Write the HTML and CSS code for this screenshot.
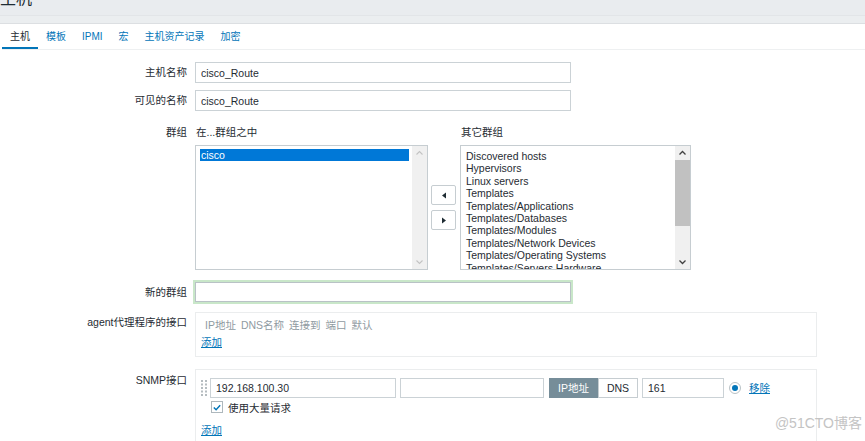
FILE: index.html
```html
<!DOCTYPE html>
<html>
<head>
<meta charset="utf-8">
<link rel="stylesheet" href="styles.css">
</head>
<body>
<header class="page-header"><h1 class="title">主机</h1></header>
<div class="content">
  <nav class="tabs">
    <a class="tab active">主机</a>
    <a class="tab">模板</a>
    <a class="tab">IPMI</a>
    <a class="tab">宏</a>
    <a class="tab">主机资产记录</a>
    <a class="tab">加密</a>
  </nav>
  <div class="form">
    <div class="row row-name">
      <div class="lbl">主机名称</div>
      <input class="text wide" value="cisco_Route">
    </div>
    <div class="row row-visible">
      <div class="lbl">可见的名称</div>
      <input class="text wide" value="cisco_Route">
    </div>
    <div class="row row-groups">
      <div class="lbl lbl-head">群组</div>
      <div class="groups">
        <div class="group-head">在...群组之中</div>
        <div></div>
        <div class="group-head">其它群组</div>
        <div class="listbox">
          <div class="items">
            <div class="item sel">cisco</div>
          </div>
          <div class="scroll">
            <svg class="arr" width="15" height="14" viewBox="0 0 15 14"><polyline points="4.5,8.5 7.5,5.5 10.5,8.5" fill="none" stroke="#c3c3c3" stroke-width="1.1"/></svg>
            <div class="track"></div>
            <svg class="arr" width="15" height="14" viewBox="0 0 15 14"><polyline points="4.5,5.5 7.5,8.5 10.5,5.5" fill="none" stroke="#c3c3c3" stroke-width="1.1"/></svg>
          </div>
        </div>
        <div class="move-btns">
          <button class="move-btn"><svg width="6" height="7" viewBox="0 0 6 7"><polygon points="5,0.5 5,6.5 1,3.5" fill="#1f2c33"/></svg></button>
          <button class="move-btn"><svg width="6" height="7" viewBox="0 0 6 7"><polygon points="1,0.5 1,6.5 5,3.5" fill="#1f2c33"/></svg></button>
        </div>
        <div class="listbox">
          <div class="items other">
            <div class="item">Discovered hosts</div>
            <div class="item">Hypervisors</div>
            <div class="item">Linux servers</div>
            <div class="item">Templates</div>
            <div class="item">Templates/Applications</div>
            <div class="item">Templates/Databases</div>
            <div class="item">Templates/Modules</div>
            <div class="item">Templates/Network Devices</div>
            <div class="item">Templates/Operating Systems</div>
            <div class="item">Templates/Servers Hardware</div>
          </div>
          <div class="scroll">
            <svg class="arr" width="15" height="14" viewBox="0 0 15 14"><polyline points="4.5,8.5 7.5,5.5 10.5,8.5" fill="none" stroke="#404040" stroke-width="1.3"/></svg>
            <div class="track"><div class="thumb"></div></div>
            <svg class="arr" width="15" height="14" viewBox="0 0 15 14"><polyline points="4.5,5.5 7.5,8.5 10.5,5.5" fill="none" stroke="#404040" stroke-width="1.3"/></svg>
          </div>
        </div>
      </div>
    </div>
    <div class="row row-newgroup">
      <div class="lbl">新的群组</div>
      <input class="text wide focus" value="">
    </div>
    <div class="row row-agent">
      <div class="lbl lbl-box">agent代理程序的接口</div>
      <div class="iface-box agent-box">
        <div class="iface-head">
          <span>IP地址</span><span>DNS名称</span><span>连接到</span><span>端口</span><span>默认</span>
        </div>
        <a class="link">添加</a>
      </div>
    </div>
    <div class="row row-snmp">
      <div class="lbl lbl-snmp">SNMP接口</div>
      <div class="iface-box snmp-box">
        <div class="snmp-line">
          <svg class="handle" width="6" height="16" viewBox="0 0 6 16">
            <g fill="#b5bcc0">
              <rect x="0" y="0" width="2" height="2"/><rect x="4" y="0" width="2" height="2"/>
              <rect x="0" y="3.5" width="2" height="2"/><rect x="4" y="3.5" width="2" height="2"/>
              <rect x="0" y="7" width="2" height="2"/><rect x="4" y="7" width="2" height="2"/>
              <rect x="0" y="10.5" width="2" height="2"/><rect x="4" y="10.5" width="2" height="2"/>
              <rect x="0" y="14" width="2" height="2"/><rect x="4" y="14" width="2" height="2"/>
            </g>
          </svg>
          <input class="text ip" value="192.168.100.30">
          <input class="text dns" value="">
          <div class="seg">
            <span class="seg-btn on">IP地址</span><span class="seg-btn">DNS</span>
          </div>
          <input class="text port" value="161">
          <span class="radio"><span class="dot"></span></span>
          <a class="link remove">移除</a>
        </div>
        <div class="bulk-line">
          <span class="checkbox"><svg width="11" height="11" viewBox="0 0 11 11"><polyline points="2,5.5 4.5,8 9,3" fill="none" stroke="#0275b8" stroke-width="1.6"/></svg></span>
          <span class="bulk-text">使用大量请求</span>
        </div>
        <a class="link add-snmp">添加</a>
      </div>
    </div>
  </div>
</div>
<div class="watermark">@51CTO博客</div>
</body>
</html>
```
FILE: styles.css
```css
* { box-sizing: border-box; }

body {
  margin: 0;
  width: 865px;
  height: 441px;
  overflow: hidden;
  position: relative;
  background: #fff;
  color: #1f2c33;
  font-family: "Liberation Sans", Arial, "Noto Sans CJK SC", sans-serif;
  font-size: 10.5px;
}

.page-header {
  height: 24px;
  background: linear-gradient(#e9ecef 0, #e9ecef 15px, #e2e5e8 15px, #e2e5e8 16px, #ebeef0 16px);
  border-bottom: 1px solid #dcdfe2;
  overflow: hidden;
}

.title {
  margin: -9px 0 0 0;
  font-size: 16px;
  line-height: 16px;
  font-weight: normal;
  color: #1f2c33;
}

.content {
  margin-left: 2px;
}

.tabs {
  display: flex;
  height: 26px;
  border-bottom: 1px solid #eef0f1;
  font-size: 10px;
}

.tab {
  padding: 0 8px;
  line-height: 26px;
  height: 25px;
  color: #0275b8;
  border-bottom: 2px solid transparent;
}

.tab.active {
  color: #1f2c33;
  border-bottom-color: #0275b8;
}

.form {
  padding-top: 12px;
}

.row {
  display: flex;
  align-items: flex-start;
}

.lbl {
  width: 193px;
  flex: none;
  text-align: right;
  padding-right: 8px;
  line-height: 21px;
}

.text {
  height: 21px;
  border: 1px solid #cbd2d6;
  padding: 0 5px;
  font: inherit;
  color: #1f2c33;
  background: #fff;
  outline: none;
}

.wide { width: 376px; }

.row-visible { margin-top: 7px; }

.row-groups { margin-top: 14px; }

.lbl-head { line-height: 14px; }

.groups {
  display: grid;
  grid-template-columns: 233px 25px 232px;
  column-gap: 3px;
}

.groups > :nth-child(3n) { margin-left: 1px; }

.group-head {
  line-height: 14px;
  padding-left: 1px;
  margin-bottom: 6px;
}

.listbox {
  height: 125px;
  border: 1px solid #c6cdd1;
  display: flex;
  background: #fff;
  overflow: hidden;
}

.items {
  flex: 1;
  padding: 2px 3px 0 4px;
  overflow: hidden;
}

.items.other {
  padding: 4px 0 0 5px;
}

.item {
  line-height: 12.4px;
  height: 12.4px;
  white-space: nowrap;
  color: #1f2c33;
}

.item.sel {
  background: #0078d7;
  color: #fff;
  height: 12px;
  line-height: 12px;
  padding-left: 1px;
  margin-top: 1px;
}

.scroll {
  width: 15px;
  flex: none;
  background: #f0f0f0;
  display: flex;
  flex-direction: column;
}

.arr { display: block; flex: none; }

.track {
  flex: 1;
  position: relative;
}

.thumb {
  height: 66px;
  background: #c1c1c1;
}

.move-btns {
  display: flex;
  flex-direction: column;
  gap: 5px;
  align-self: center;
}

.move-btn {
  width: 25px;
  height: 20px;
  border: 1px solid #c6cdd1;
  border-radius: 2px;
  background: #fff;
  padding: 0;
  display: flex;
  align-items: center;
  justify-content: center;
}

.row-newgroup { margin-top: 12px; }

.focus {
  height: 20px;
  border-color: #b9c2c6;
  box-shadow: 0 0 0 2px #c9e7c9;
}

.row-agent { margin-top: 9px; }

.lbl-box { line-height: 21px; }

.iface-box {
  width: 622px;
  border: 1px solid #ebedee;
  padding-left: 5px;
}

.agent-box {
  padding-top: 5px;
  padding-bottom: 7px;
}

.iface-head {
  display: flex;
  gap: 5px;
  padding-left: 4px;
  line-height: 14px;
  margin-bottom: 3px;
  color: #8f9aa1;
}

.link {
  display: inline-block;
  color: #0275b8;
  text-decoration: underline;
  line-height: 14px;
  cursor: pointer;
}

.row-snmp { margin-top: 12px; }

.lbl-snmp { line-height: 22px; }

.snmp-box {
  height: 80px;
  padding-top: 8px;
}

.snmp-line {
  display: flex;
  align-items: center;
  height: 20px;
}

.handle { margin-right: 3px; flex: none; }

.snmp-line .text { height: 20px; }

.ip { width: 186px; margin-right: 4px; }
.dns { width: 144px; margin-right: 5px; }

.seg {
  display: flex;
  height: 20px;
  margin-right: 4px;
}

.seg-btn {
  height: 20px;
  line-height: 18px;
  border: 1px solid #c6cdd1;
  background: #fff;
  text-align: center;
  width: 40px;
  color: #1f2c33;
}

.seg-btn.on {
  width: 49px;
  background: #768d99;
  border-color: #768d99;
  color: #fff;
}

.port { width: 82px; margin-right: 5px; }

.radio {
  width: 12px;
  height: 12px;
  border: 1px solid #b9c2c6;
  border-radius: 50%;
  display: flex;
  align-items: center;
  justify-content: center;
  margin-right: 8px;
  flex: none;
}

.dot {
  width: 6px;
  height: 6px;
  border-radius: 50%;
  background: #0275b8;
}

.bulk-line {
  display: flex;
  align-items: center;
  margin-top: 2px;
  margin-left: 10px;
  height: 14px;
}

.checkbox {
  width: 12px;
  height: 12px;
  border: 1px solid #aeb8bd;
  background: #fff;
  display: flex;
  align-items: center;
  justify-content: center;
  margin-right: 5px;
}

.add-snmp { margin-top: 9px; }

.watermark {
  position: absolute;
  right: 3px;
  bottom: 9px;
  font-size: 14px;
  color: #c4c4c4;
}
```
